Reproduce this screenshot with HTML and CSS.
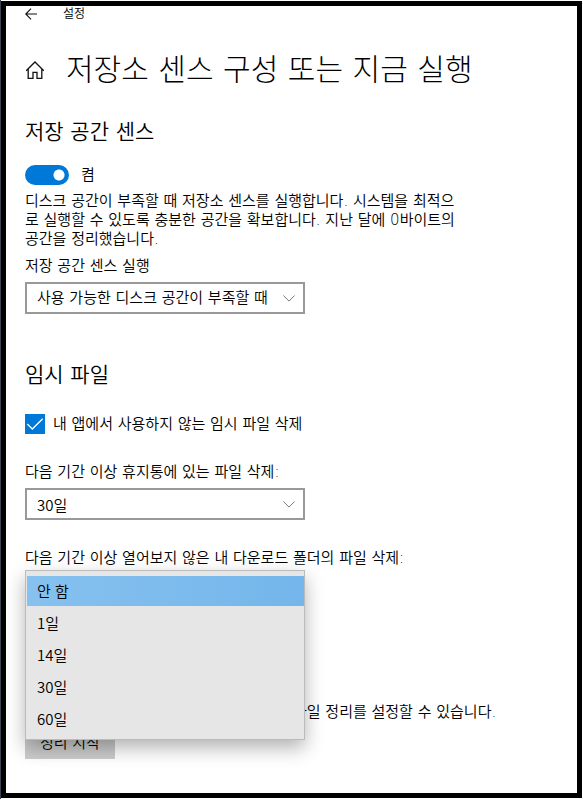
FILE: index.html
```html
<!DOCTYPE html>
<html lang="ko">
<head>
  <meta charset="UTF-8">
  <meta name="viewport" content="width=device-width, initial-scale=1.0">
  <title>설정</title>
  <link rel="stylesheet" href="styles.css">
</head>
<body>
  <div class="window">
    <header class="titlebar">
      <button type="button" class="icon-btn" aria-label="뒤로">
        <svg width="12" height="12" viewBox="0 0 12 12" fill="none" stroke="#111" stroke-width="1.1">
          <path d="M6 .7.8 6 6 11.3M.8 6H12" />
        </svg>
      </button>
      <span>설정</span>
    </header>

    <div class="page-title">
      <a href="#" class="home" aria-label="홈">
        <svg width="20" height="20" viewBox="0 0 20 20" fill="none" stroke="#111" stroke-width="1.3">
          <path d="M1.2 10.8 10 2l8.8 8.8M3.2 9v9.3h4.8v-6h4v6h4.8V9" />
        </svg>
      </a>
      <h1>저장소 센스 구성 또는 지금 실행</h1>
    </div>

    <main>
      <!-- 저장 공간 센스 -->
      <section>
        <h2>저장 공간 센스</h2>
        <label class="switch">
          <input type="checkbox" role="switch" checked>
          <span>켬</span>
        </label>
        <p class="description">디스크 공간이 부족할 때 저장소 센스를 실행합니다. 시스템을 최적으로 실행할 수 있도록 충분한 공간을 확보합니다. 지난 달에 0바이트의 공간을 정리했습니다.</p>
        <div class="field run-field">
          <label for="run">저장 공간 센스 실행</label>
          <select id="run">
            <option>사용 가능한 디스크 공간이 부족할 때</option>
            <option>매일</option>
            <option>매주</option>
            <option>매월</option>
          </select>
        </div>
      </section>

      <!-- 임시 파일 -->
      <section class="temp-files">
        <h2>임시 파일</h2>
        <label class="check">
          <input type="checkbox" checked>
          <span>내 앱에서 사용하지 않는 임시 파일 삭제</span>
        </label>
        <div class="field">
          <label for="recycle">다음 기간 이상 휴지통에 있는 파일 삭제:</label>
          <select id="recycle" class="days">
            <option>안 함</option>
            <option>1일</option>
            <option>14일</option>
            <option selected>30일</option>
            <option>60일</option>
          </select>
        </div>
        <div class="field">
          <label for="downloads">다음 기간 이상 열어보지 않은 내 다운로드 폴더의 파일 삭제:</label>
          <div class="dropdown">
            <select id="downloads" class="days">
              <option>안 함</option>
              <option>1일</option>
              <option>14일</option>
              <option>30일</option>
              <option>60일</option>
            </select>
            <!-- 열린 목록 -->
            <ul class="dropdown-list" role="listbox" aria-label="다운로드 파일 삭제 기간">
              <li role="option" aria-selected="true">안 함</li>
              <li role="option">1일</li>
              <li role="option">14일</li>
              <li role="option">30일</li>
              <li role="option">60일</li>
            </ul>
          </div>
        </div>
      </section>

      <section class="clean-now">
        <p>공간이 부족한 경우에, 현재 설정으로 지금 파일 정리를 설정할 수 있습니다.</p>
        <button type="button" class="btn">정리 시작</button>
      </section>
    </main>
  </div>
</body>
</html>
```
FILE: styles.css
```css
* {
  box-sizing: border-box;
}

body {
  margin: 0;
  padding: 1px 1px 1px 0;
  border-left: 1px solid #3b4450;
  background: #fff;
  color: #000;
  font-family: "DejaVu Sans", "Noto Sans CJK KR", sans-serif;
  font-size: 15px;
  font-weight: 350;
  line-height: 19px;
}

h1, h2, p, ul {
  margin: 0;
  padding: 0;
}

.window {
  min-height: calc(100vh - 2px);
  padding: 0 19px 34px;
  border: 5px solid #000;
}

/* 상단 바 */
.titlebar {
  display: flex;
  align-items: center;
  gap: 26px;
  height: 16px;
  font-size: 12px;
  line-height: 16px;
}

.icon-btn {
  display: flex;
  width: 12px;
  padding: 0;
  border: none;
  background: none;
  cursor: pointer;
}

.page-title {
  display: flex;
  align-items: center;
  gap: 21px;
  margin-top: 28px;
}

.home {
  display: flex;
}

h1 {
  font-size: 30px;
  font-weight: 300;
  line-height: 40px;
}

h2 {
  margin-top: 28px;
  font-size: 21px;
  font-weight: 350;
  line-height: 28px;
}

.switch {
  display: flex;
  align-items: center;
  gap: 12px;
  margin-top: 19px;
}

.switch input {
  appearance: none;
  width: 44px;
  height: 20px;
  margin: 0;
  border-radius: 10px;
  background: radial-gradient(circle at 34px 10px, #fff 5px, #0078d7 6px);
}

.description {
  max-width: 440px;
  margin-top: 7px;
}

.field {
  display: flex;
  flex-direction: column;
  gap: 6px;
  margin-top: 29px;
}

.run-field {
  margin-top: 8px;
}

select {
  appearance: none;
  width: 280px;
  height: 32px;
  padding: 0 10px;
  border: 2px solid #999;
  border-radius: 0;
  background: #fff url("data:image/svg+xml,%3Csvg xmlns='http://www.w3.org/2000/svg' width='12' height='7' fill='none' stroke='%23777'%3E%3Cpath d='M.4.5 6 6.1 11.6.5'/%3E%3C/svg%3E") no-repeat right 8px center;
  color: #000;
  font: inherit;
}

.days,
.dropdown-list {
  font-family: "Noto Sans CJK KR", sans-serif;
}

.temp-files h2 {
  margin-top: 47px;
}

.check {
  display: flex;
  align-items: center;
  gap: 8px;
  margin-top: 25px;
}

.check input {
  appearance: none;
  width: 20px;
  height: 20px;
  margin: 0;
  background: #0078d7 url("data:image/svg+xml,%3Csvg xmlns='http://www.w3.org/2000/svg' width='20' height='20' fill='none' stroke='white' stroke-width='1.3'%3E%3Cpath d='M2.3 10 7.3 15 17.7 4.7'/%3E%3C/svg%3E") no-repeat center;
}

.dropdown {
  position: relative;
  width: 280px;
}

.dropdown select {
  display: block;
}

.dropdown-list {
  position: absolute;
  top: -4px;
  left: 0;
  width: 100%;
  padding: 4px 0 4px 1px;
  border: 1px solid #bbb;
  background: #e6e6e6;
  box-shadow: 0 8px 18px rgba(0, 0, 0, 0.3);
  list-style: none;
}

.dropdown-list li {
  padding: 0 10px;
  line-height: 32px;
}

.dropdown-list li[aria-selected="true"] {
  border: solid transparent;
  border-width: 1px 0;
  background: linear-gradient(to right, #86c1ef, #74b6eb) padding-box;
  line-height: 30px;
}

.clean-now {
  margin-top: 97px;
}

.btn {
  height: 32px;
  margin-top: 5px;
  padding: 0 15px;
  border: none;
  background: #ccc;
  color: #000;
  font: inherit;
}
```
